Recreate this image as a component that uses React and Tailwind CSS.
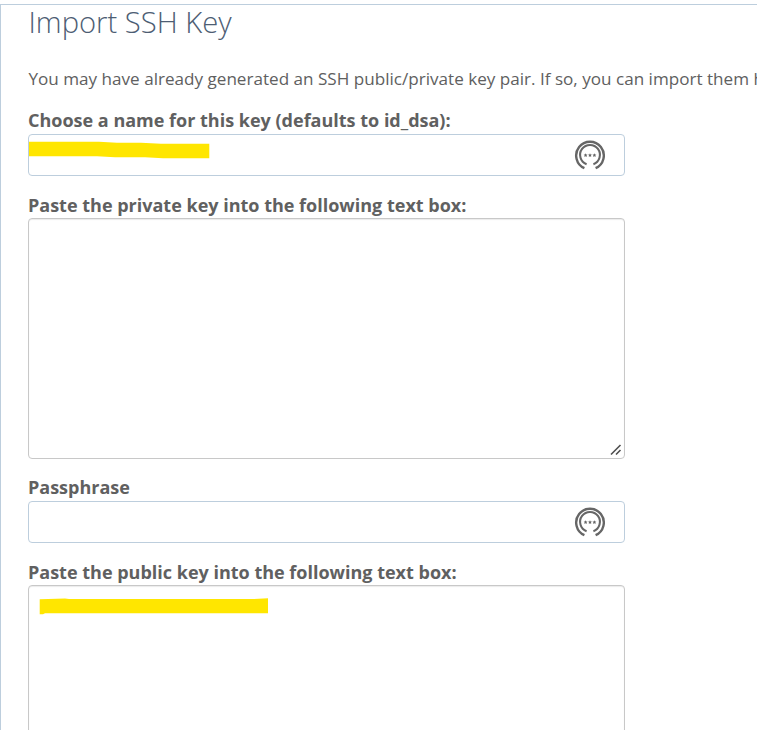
const fieldClass = "relative w-[597px] rounded border bg-white";

function Label({ children, compact = false }) {
  return (
    <label
      className={`block whitespace-nowrap pt-px text-[18px] font-bold leading-[26px] text-[#606060] ${compact ? "h-[27px]" : "h-7"}`}
    >
      {children}
    </label>
  );
}

function PasswordIcon() {
  return (
    <svg className="mr-[18px] h-8 w-8" viewBox="0 0 32 32" fill="none" stroke="#666666">
      <path d="M10.4 29.2A13.8 13.8 0 1 1 21.6 29.2" strokeWidth="2.4" />
      <path d="M12.6 25.2A9.9 9.9 0 1 1 19.4 25.2" strokeWidth="2.1" />
      <g fill="#666666" stroke="none">
        {[11.6, 16, 20.4].map((x) => (
          <path
            key={x}
            transform={`translate(${x} 16.2)`}
            d="M0-1.9.6-.7 1.9-.6 1 .4 1.2 1.7 0 1.1-1.2 1.7-1 .4-1.9-.6-.6-.7Z"
          />
        ))}
      </g>
    </svg>
  );
}

function Field({ children }) {
  return (
    <div className={`${fieldClass} flex h-[42px] items-center justify-end border-[#bdcedd]`}>
      {children}
      <PasswordIcon />
    </div>
  );
}

export default function App() {
  return (
    <div className="h-[730px] w-[757px] overflow-hidden bg-white pt-1 font-['Open_Sans','Noto_Sans',sans-serif]">
      <main className="h-[726px] overflow-hidden border-l border-t border-[#bdcedd] pl-[27.5px]">
        <h1 className="h-[60px] whitespace-nowrap text-[29.2px] font-light leading-[34px] text-[#4d5d73]">
          Import SSH Key
        </h1>
        <p className="h-[41px] whitespace-nowrap text-[17.1px] leading-7 text-[#606060]">
          You may have already generated an SSH public/private key pair. If so, you can import them here.
        </p>
        <div className="-ml-[0.5px]">
          <Label>Choose a name for this key (defaults to id_dsa):</Label>
          <Field>
            <svg className="absolute left-0 top-[6px] h-[19px] w-[181px]" viewBox="0 0 181 19" fill="#ffe600">
              <path d="M0 .7H70L88 1.7H112L132 2.7H180.3V17.3H134L116 16.3H86L68 15.3H0Z" />
            </svg>
          </Field>
          <div className="h-[15px]" />
          <Label compact>Paste the private key into the following text box:</Label>
          <div className={`${fieldClass} flex h-[241px] items-end justify-end border-[#c8c8c8] shadow-[inset_0_1px_1px_rgba(0,0,0,0.08)]`}>
            <svg className="mb-0.5 mr-0.5 h-3 w-3" viewBox="0 0 12 12" stroke="#505050" strokeWidth="1.6">
              <path d="M1 10.5 10.5 1M6 10.5 10.5 6" />
            </svg>
          </div>
          <div className="h-[14px]" />
          <Label>Passphrase</Label>
          <Field />
          <div className="h-[15px]" />
          <Label compact>Paste the public key into the following text box:</Label>
          <div className={`${fieldClass} h-[180px] border-[#c8c8c8] pl-[10px] pt-3 shadow-[inset_0_1px_1px_rgba(0,0,0,0.08)]`}>
            <svg className="h-[17px] w-[230px]" viewBox="0 0 230 17" fill="#ffe600">
              <path d="M.7 1.2 26 .6 30 1H215L229 .2V15.3H6L4 16.3H.7Z" />
            </svg>
          </div>
        </div>
      </main>
    </div>
  );
}
